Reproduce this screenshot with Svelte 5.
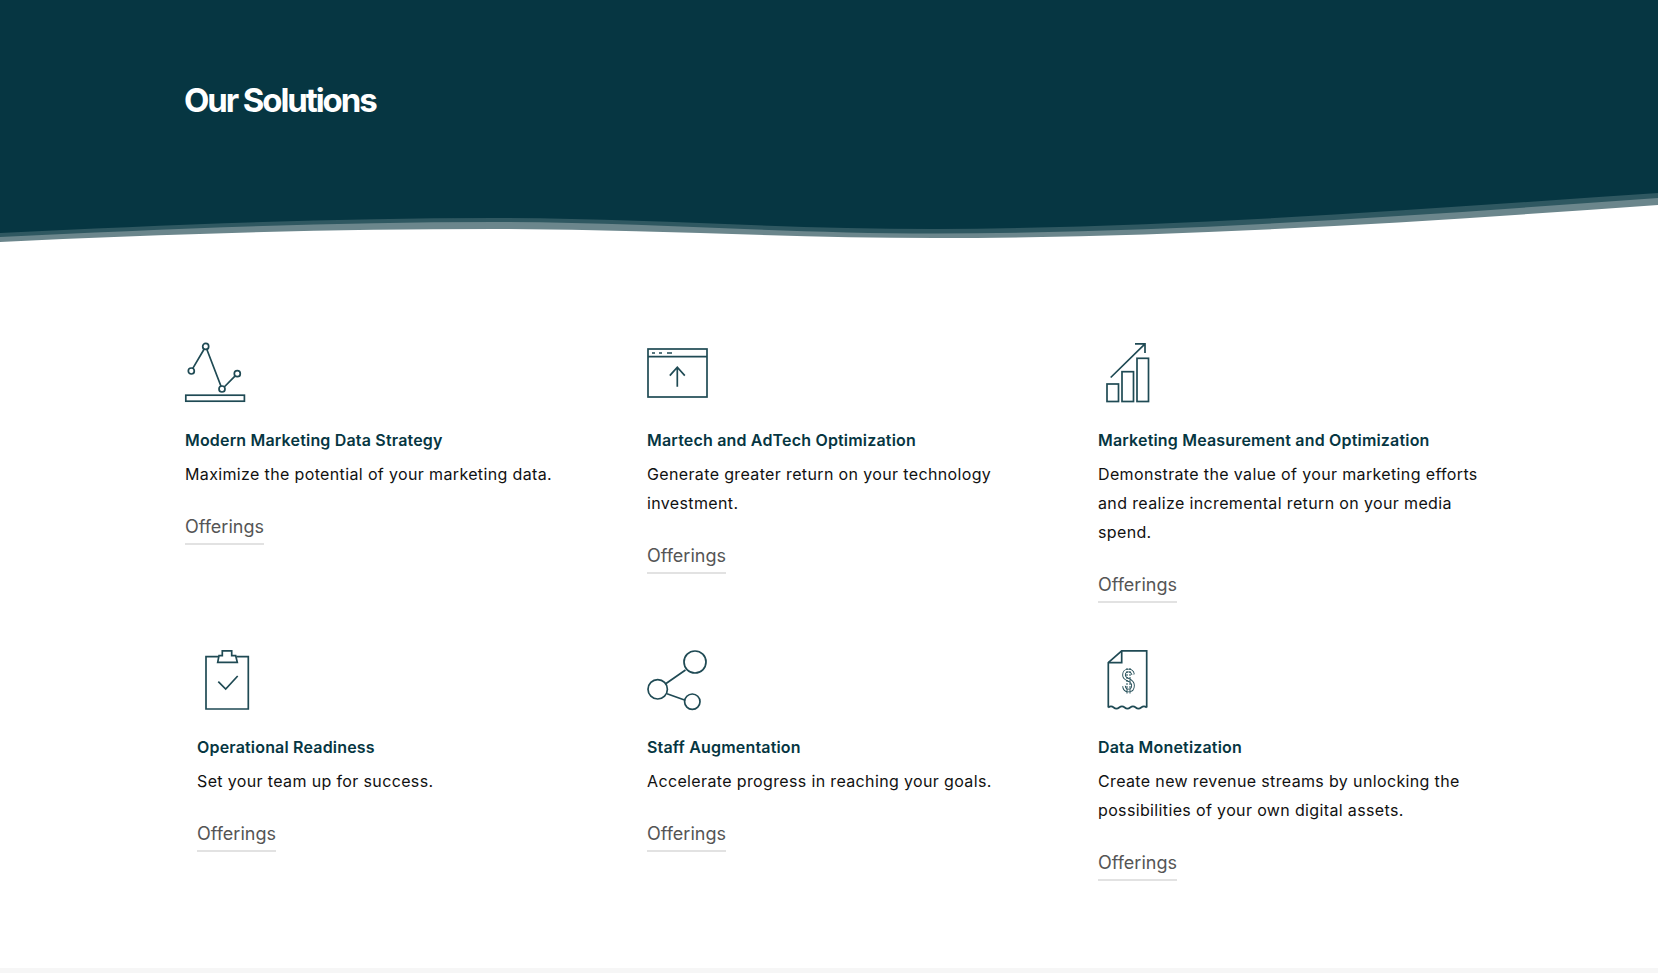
<script>
  const solutions = [
    { icon: 'chart', title: 'Modern Marketing Data Strategy', text: 'Maximize the potential of your marketing data.' },
    { icon: 'upload', title: 'Martech and AdTech Optimization', text: 'Generate greater return on your technology investment.' },
    { icon: 'growth', title: 'Marketing Measurement and Optimization', text: 'Demonstrate the value of your marketing efforts and realize incremental return on your media spend.' },
    { icon: 'clipboard', title: 'Operational Readiness', text: 'Set your team up for success.', inset: true },
    { icon: 'share', title: 'Staff Augmentation', text: 'Accelerate progress in reaching your goals.' },
    { icon: 'invoice', title: 'Data Monetization', text: 'Create new revenue streams by unlocking the possibilities of your own digital assets.' }
  ];
</script>

<header class="hero">
  <h1>Our Solutions</h1>
</header>
<svg class="wave" viewBox="0 0 1658 60" preserveAspectRatio="none" aria-hidden="true">
  <path fill="#6b868c" d="M0 0H1658V20C1420 37 1180 53 935 53C790 53 640 44 492 44C330 44 160 49 0 57Z"/>
  <path fill="#2f5861" d="M0 0H1658V13C1420 30 1180 48 935 48.5C780 48.5 640 37 492 37C330 37 160 44 0 52Z"/>
  <path fill="#063642" d="M0 0H1658V8C1420 24 1180 43 935 44C780 44 640 33 492 33C330 33 160 40 0 48Z"/>
</svg>

<main class="grid">
  {#each solutions as item}
    <article class="card" class:inset={item.inset}>
      <svg class="icon" width="60" height="60" viewBox="0 0 60 60" fill="none" aria-hidden="true">
        {#if item.icon === 'chart'}
          <circle cx="6.3" cy="28" r="3"/>
          <circle cx="20.7" cy="3.4" r="3"/>
          <circle cx="37" cy="46" r="3"/>
          <circle cx="52.3" cy="30.7" r="3"/>
          <path d="M7.8 25.4 19.2 6M21.8 6.2 36 43.2M39.2 44 50.2 32.8"/>
          <rect x="0.8" y="52.2" width="58.6" height="6"/>
        {:else if item.icon === 'upload'}
          <rect x="1" y="6" width="59" height="48"/>
          <path d="M1 13.7H60M5 10H8M12 10H15M20 10H25M30.3 43.7V24.3M22.8 32.6 30.3 24.3 37.8 32.6"/>
        {:else if item.icon === 'growth'}
          <rect x="9" y="41" width="11.5" height="17.5"/>
          <rect x="24" y="28.7" width="11.5" height="29.8"/>
          <rect x="39" y="15.3" width="11.5" height="43.2"/>
          <path d="M12.7 34.5 47 0.8M37 0.8H47V10"/>
        {:else if item.icon === 'clipboard'}
          <path d="M21 6.7H9V59H51.3V6.7H39.5"/>
          <path d="M20.7 12.3 22 5.7H25.3V.8H34.7V5.7H38.7L40.3 12.3Z"/>
          <path d="M21.3 31.7 28.7 39 40.7 26"/>
        {:else if item.icon === 'share'}
          <circle cx="48" cy="12" r="11"/>
          <circle cx="10.7" cy="39.3" r="9.7"/>
          <circle cx="45.3" cy="51.7" r="7.7"/>
          <path d="M18.7 33.7 38.5 20M20 43.8 38.2 50.2"/>
        {:else if item.icon === 'invoice'}
          <path d="M10.3 57.5V12.7L23.7.8H48.7V57.5"/>
          <path d="M10.3 12.7H23.7V.8"/>
          <path d="M10.3 57.5q2.7-2.4 5.4 0t5.5 0 5.5 0 5.5 0 5.5 0 5.5 0 5.5 0"/>
          <path class="bill-s" d="M35 24.5C34.5 21.5 33 20.5 30.5 20.5C27.5 20.5 26 22.5 26 25C26 31 35 28.5 35 35.5C35 38.5 33.5 40.5 30.5 40.5C27.5 40.5 26.2 38.5 26 36"/>
          <path class="bill-s-in" d="M35 24.5C34.5 21.5 33 20.5 30.5 20.5C27.5 20.5 26 22.5 26 25C26 31 35 28.5 35 35.5C35 38.5 33.5 40.5 30.5 40.5C27.5 40.5 26.2 38.5 26 36"/>
          <path class="bill-bar" d="M29 18V43.5M32 18V43.5"/>
        {/if}
      </svg>
      <h3>{item.title}</h3>
      <p>{item.text}</p>
      <a href="#offerings">Offerings</a>
    </article>
  {/each}
</main>

<footer></footer>

<style>
  :global(body) {
    background: #fff;
    font-family: Inter, "Noto Sans", sans-serif;
  }

  .hero {
    height: 185px;
    padding: 84px 0 0 184px;
    box-sizing: border-box;
    background: #063642;
  }

  h1 {
    margin: 0;
    font-size: 33px;
    line-height: 32px;
    font-weight: 700;
    letter-spacing: -2.1px;
    color: #fff;
  }

  .wave {
    display: block;
    width: 100%;
    height: 60px;
  }

  .grid {
    display: grid;
    grid-template-columns: 462px 451px 1fr;
    row-gap: 47px;
    padding: 98px 0 87px 185px;
  }

  .card {
    display: flex;
    flex-direction: column;
    align-items: flex-start;
    max-width: 385px;
  }

  .inset {
    padding-left: 12px;
  }

  .icon {
    display: block;
    overflow: visible;
    stroke: #1f4a54;
    stroke-width: 1.7;
  }

  .bill-s {
    stroke-width: 3.6;
  }

  .bill-s-in {
    stroke: #fff;
    stroke-width: 1.8;
  }

  .bill-bar {
    stroke-width: 1;
    stroke-dasharray: 2 1;
  }

  h3 {
    margin: 25px 0 8px;
    font-size: 16px;
    line-height: 24px;
    font-weight: 600;
    letter-spacing: .18px;
    color: #063642;
  }

  p {
    margin: 0;
    font-size: 16px;
    line-height: 29px;
    letter-spacing: .36px;
    color: #111;
  }

  a {
    display: inline-block;
    margin-top: 26px;
    padding-bottom: 4px;
    border-bottom: 2px solid #e2e2e2;
    font-size: 18px;
    line-height: 24px;
    color: #555;
    text-decoration: none;
  }

  footer {
    height: 6px;
    background: #f6f6f6;
  }
</style>
